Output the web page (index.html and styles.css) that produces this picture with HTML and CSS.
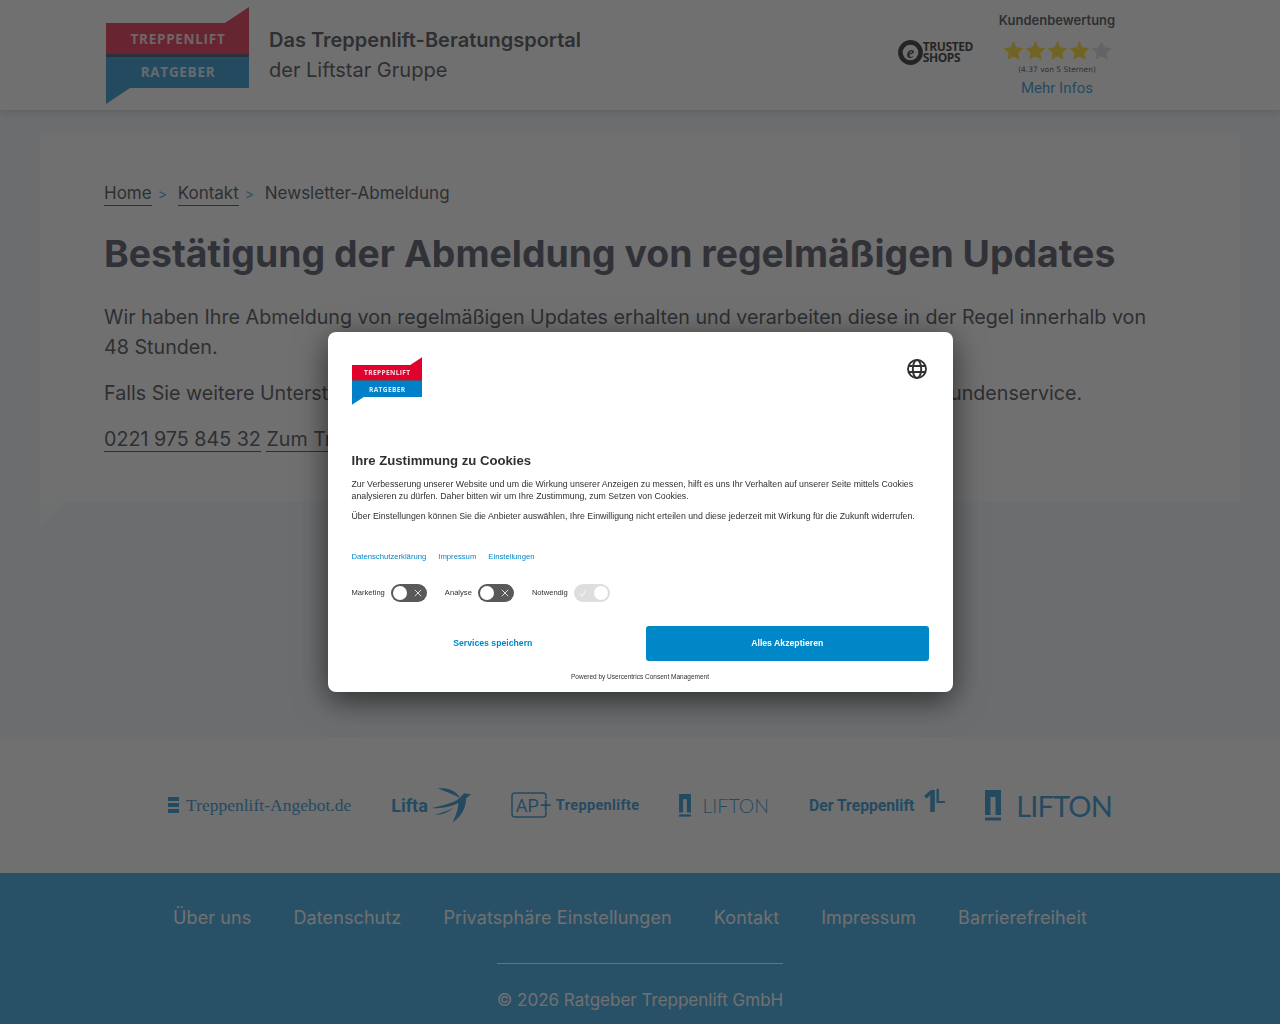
FILE: index.html
```html
<!DOCTYPE html>
<html lang="de">
<head>
    <meta charset="UTF-8">
    <meta name="viewport" content="width=device-width, initial-scale=1.0">
    <title>Bestätigung der Abmeldung</title>
    <link rel="stylesheet" href="styles.css">
</head>
<body>
    <header class="site-header">
        <div class="header-inner">
            <a class="brand" href="#">
                <svg class="brand-logo" viewBox="0 0 143 97" aria-hidden="true">
                    <polygon points="0,16 119,16 143,0 143,47 0,47" fill="#e2002d"/>
                    <rect x="0" y="47" width="143" height="3" fill="#1d2a4a"/>
                    <polygon points="0,50 143,50 143,81 24,81 0,97" fill="#0080c9"/>
                    <text x="72" y="37" class="logo-word">TREPPENLIFT</text>
                    <text x="72" y="70" class="logo-word">RATGEBER</text>
                </svg>
                <span class="brand-text">
                    <strong>Das Treppenlift-Beratungsportal</strong>
                    <span>der Liftstar Gruppe</span>
                </span>
            </a>
            <div class="rating">
                <div class="ts-badge">
                    <svg class="ts-seal" viewBox="0 0 24 24" aria-hidden="true">
                        <circle cx="12" cy="12" r="9.7" fill="none" stroke="#000" stroke-width="4.4"/>
                        <text x="12" y="17" class="ts-e">e</text>
                    </svg>
                    <span class="ts-name">TRUSTED<br>SHOPS</span>
                </div>
                <div class="rating-box">
                    <div class="rating-title">Kundenbewertung</div>
                    <div class="stars">
                        <svg viewBox="0 0 24 24"><polygon class="star" points="12,1 15.4,8.3 23.3,9.3 17.5,14.8 19,22.7 12,18.8 5,22.7 6.5,14.8 .7,9.3 8.6,8.3"/></svg>
                        <svg viewBox="0 0 24 24"><polygon class="star" points="12,1 15.4,8.3 23.3,9.3 17.5,14.8 19,22.7 12,18.8 5,22.7 6.5,14.8 .7,9.3 8.6,8.3"/></svg>
                        <svg viewBox="0 0 24 24"><polygon class="star" points="12,1 15.4,8.3 23.3,9.3 17.5,14.8 19,22.7 12,18.8 5,22.7 6.5,14.8 .7,9.3 8.6,8.3"/></svg>
                        <svg viewBox="0 0 24 24"><polygon class="star" points="12,1 15.4,8.3 23.3,9.3 17.5,14.8 19,22.7 12,18.8 5,22.7 6.5,14.8 .7,9.3 8.6,8.3"/></svg>
                        <svg viewBox="0 0 24 24"><polygon class="star star-off" points="12,1 15.4,8.3 23.3,9.3 17.5,14.8 19,22.7 12,18.8 5,22.7 6.5,14.8 .7,9.3 8.6,8.3"/></svg>
                    </div>
                    <div class="rating-note">(4.37 von 5 Sternen)</div>
                    <a class="rating-link" href="#">Mehr Infos</a>
                </div>
            </div>
        </div>
    </header>

    <main class="page">
        <section class="card">
            <nav class="crumbs">
                <a href="#">Home</a><span class="sep">&gt;</span>
                <a href="#">Kontakt</a><span class="sep">&gt;</span>
                <span>Newsletter-Abmeldung</span>
            </nav>
            <h1>Bestätigung der Abmeldung von regelmäßigen Updates</h1>
            <p>Wir haben Ihre Abmeldung von regelmäßigen Updates erhalten und verarbeiten diese in der Regel innerhalb von 48 Stunden.</p>
            <p>Falls Sie weitere Unterstützung benötigen sollten, kontaktieren Sie bitte jederzeit unseren Kundenservice.</p>
            <p><a href="#">0221 975 845 32</a> <a href="#">Zum Treppenlift-Ratgeber</a></p>
        </section>
    </main>

    <section class="brands">
        <div class="brand-item">
            <span class="ta-bars"><i></i><i></i><i></i></span>
            <span class="ta-name">Treppenlift-Angebot.de</span>
        </div>
        <div class="brand-item lifta">
            <span class="lifta-name">Lifta</span>
            <svg class="lifta-bird" viewBox="0 0 40 35" aria-hidden="true">
                <path d="M6 0 C15 -1 24 1 29 10 C22 6 14 3 6 0Z"/>
                <path d="M0 20 C11 17 23 15 28 10 L33 5 L40 6 L35 10 C35 19 31 28 21 35 C25 27 27 20 27 15 C19 19 10 21 0 20Z"/>
                <path d="M3 27 C10 25 16 23 22 20 C16 25 10 27 3 27Z"/>
            </svg>
        </div>
        <div class="brand-item ap">
            <span class="ap-box">
                <svg class="ap-frame" viewBox="0 0 36 26" aria-hidden="true">
                    <path d="M35 7V4Q35 1 32 1H4Q1 1 1 4V22Q1 25 4 25H32Q35 25 35 22V19"/>
                </svg>
                AP<b>+</b>
            </span>
            <span class="ap-name">Treppenlifte</span>
        </div>
        <div class="brand-item lifton">
            <svg class="lifton-mark" viewBox="0 0 16 31" aria-hidden="true">
                <path d="M0 0H16V25H10.5V7H5.5V25H0Z"/>
                <rect y="27.5" width="16" height="3"/>
            </svg>
            <span class="lifton-name">LIFTON</span>
        </div>
        <div class="brand-item dt">
            <span class="dt-name">Der Treppenlift</span>
            <span class="dt-mark">1<span>L</span></span>
        </div>
        <div class="brand-item lifton lifton-big">
            <svg class="lifton-mark" viewBox="0 0 16 31" aria-hidden="true">
                <path d="M0 0H16V25H10.5V7H5.5V25H0Z"/>
                <rect y="27.5" width="16" height="3"/>
            </svg>
            <span class="lifton-name">LIFTON</span>
        </div>
    </section>

    <footer class="site-footer">
        <nav class="footer-nav">
            <a href="#">Über uns</a>
            <a href="#">Datenschutz</a>
            <a href="#">Privatsphäre Einstellungen</a>
            <a href="#">Kontakt</a>
            <a href="#">Impressum</a>
            <a href="#">Barrierefreiheit</a>
        </nav>
        <div class="copyright">© 2026 Ratgeber Treppenlift GmbH</div>
    </footer>

    <!-- Cookie dialog -->
    <div class="overlay">
        <div class="dialog">
            <div class="dialog-top">
                <svg class="dialog-logo" viewBox="0 0 143 97" aria-hidden="true">
                    <polygon points="0,16 119,16 143,0 143,47 0,47" fill="#e2002d"/>
                    <rect x="0" y="47" width="143" height="3" fill="#1d2a4a"/>
                    <polygon points="0,50 143,50 143,81 24,81 0,97" fill="#0080c9"/>
                    <text x="72" y="37" class="logo-word">TREPPENLIFT</text>
                    <text x="72" y="70" class="logo-word">RATGEBER</text>
                </svg>
                <svg class="globe" viewBox="0 0 20 20" aria-hidden="true">
                    <circle cx="10" cy="10" r="9"/>
                    <ellipse cx="10" cy="10" rx="4.2" ry="9"/>
                    <path d="M1.6 7H18.4M1.6 13H18.4"/>
                </svg>
            </div>
            <h2>Ihre Zustimmung zu Cookies</h2>
            <p class="dialog-text">Zur Verbesserung unserer Website und um die Wirkung unserer Anzeigen zu messen, hilft es uns Ihr Verhalten auf unserer Seite mittels Cookies analysieren zu dürfen. Daher bitten wir um Ihre Zustimmung, zum Setzen von Cookies.</p>
            <p class="dialog-text">Über Einstellungen können Sie die Anbieter auswählen, Ihre Einwilligung nicht erteilen und diese jederzeit mit Wirkung für die Zukunft widerrufen.</p>
            <div class="dialog-links">
                <a href="#">Datenschutzerklärung</a>
                <a href="#">Impressum</a>
                <a href="#">Einstellungen</a>
            </div>
            <div class="toggles">
                <div class="toggle-row">
                    <span>Marketing</span>
                    <span class="toggle"><i class="knob"></i><svg viewBox="0 0 10 10"><path d="M1 1L9 9M9 1L1 9"/></svg></span>
                </div>
                <div class="toggle-row">
                    <span>Analyse</span>
                    <span class="toggle"><i class="knob"></i><svg viewBox="0 0 10 10"><path d="M1 1L9 9M9 1L1 9"/></svg></span>
                </div>
                <div class="toggle-row">
                    <span>Notwendig</span>
                    <span class="toggle toggle-on"><svg viewBox="0 0 10 10"><path d="M1 6L4 9L9 1"/></svg><i class="knob"></i></span>
                </div>
            </div>
            <div class="dialog-actions">
                <button class="btn-save">Services speichern</button>
                <button class="btn-accept">Alles Akzeptieren</button>
            </div>
            <div class="powered">Powered by Usercentrics Consent Management</div>
        </div>
    </div>
</body>
</html>
```

FILE: styles.css
```css
* {
    margin: 0;
    padding: 0;
    box-sizing: border-box;
}

body {
    background: #f1f6fa;
    color: #21252f;
    font-family: Inter, 'Noto Sans', sans-serif;
}

a {
    color: inherit;
}

/* header */
.site-header {
    height: 110px;
    background: #fff;
    box-shadow: 0 2px 8px rgba(0, 0, 0, 0.2);
    position: relative;
}

.header-inner {
    width: 1072px;
    margin: 0 auto;
    padding: 7px 0 0 2px;
    display: flex;
    justify-content: space-between;
}

.brand {
    display: flex;
    text-decoration: none;
}

.brand-logo {
    width: 143px;
    height: 97px;
}

.logo-word {
    fill: #fff;
    font-family: 'Open Sans', sans-serif;
    font-size: 13.5px;
    font-weight: 700;
    letter-spacing: 0.7px;
    text-anchor: middle;
    opacity: 0.85;
}

.brand-text {
    margin: 20px 0 0 20px;
    display: flex;
    flex-direction: column;
    gap: 4px;
    font-size: 20px;
    line-height: 26px;
}

.brand-text strong {
    font-weight: 600;
}

.rating {
    display: flex;
    margin-right: 59px;
}

.ts-badge {
    display: flex;
    align-items: center;
    height: 40px;
    margin-top: 25px;
}

.ts-seal {
    width: 25px;
    height: 25px;
}

.ts-e {
    font-family: 'Liberation Serif', serif;
    font-style: italic;
    font-size: 16px;
    font-weight: 700;
    text-anchor: middle;
}

.ts-name {
    font-family: 'Open Sans', sans-serif;
    font-size: 12px;
    font-weight: 700;
    line-height: 11px;
    letter-spacing: -0.4px;
    color: #000;
}

.rating-box {
    width: 120px;
    margin-left: 24px;
    display: flex;
    flex-direction: column;
    align-items: center;
    padding-top: 5px;
}

.rating-title {
    font-size: 13px;
    line-height: 16px;
    font-weight: 600;
}

.stars {
    display: flex;
    gap: 1px;
    margin-top: 12px;
}

.stars svg {
    width: 21px;
    height: 21px;
}

.star {
    fill: #ffd800;
}

.star-off {
    fill: #d8d8d8;
}

.rating-note {
    font-family: 'DejaVu Sans', sans-serif;
    font-size: 7.5px;
    line-height: 10px;
    margin-top: 4px;
}

.rating-link {
    font-family: Roboto, sans-serif;
    font-size: 15px;
    line-height: 20px;
    margin-top: 3px;
    color: #0080c9;
    text-decoration: none;
}

/* main */
.page {
    height: 627px;
    padding: 23px 40px 0;
}

.card {
    position: relative;
    height: 369px;
    background: #fff;
    padding: 47px 64px 0;
}

.card::after {
    content: '';
    position: absolute;
    left: 0;
    top: 100%;
    border-top: 24px solid #f8fafc;
    border-right: 24px solid transparent;
}

.crumbs {
    font-size: 17px;
    line-height: 26px;
}

.crumbs a {
    text-decoration: none;
    border-bottom: 1px solid #21252f;
    padding-bottom: 2px;
}

.sep {
    color: #1a9fb8;
    margin: 0 6px;
    font-size: 14px;
}

h1 {
    font-size: 37.4px;
    line-height: 46px;
    font-weight: 700;
    margin: 24px 0 25px;
    color: #2b2f45;
}

.card p {
    font-size: 19.7px;
    line-height: 30px;
    margin-bottom: 16px;
}

.card p a {
    text-decoration: none;
    border-bottom: 1px solid #21252f;
}

/* brand strip */
.brands {
    height: 136px;
    background: #fff;
    display: flex;
    align-items: center;
    justify-content: center;
    gap: 40px;
    color: #0080c9;
}

.brand-item {
    display: flex;
    align-items: center;
}

.ta-bars {
    display: flex;
    flex-direction: column;
    gap: 2px;
    margin-right: 7px;
}

.ta-bars i {
    display: block;
    width: 11px;
    height: 4px;
    background: #0080c9;
}

.ta-name {
    font-family: 'Liberation Serif', serif;
    font-size: 17.5px;
}

.lifta-name {
    font-family: Roboto, sans-serif;
    font-size: 18px;
    font-weight: 700;
}

.lifta-bird {
    width: 39px;
    height: 35px;
    margin-left: 4px;
    fill: #0080c9;
}

.ap-box {
    position: relative;
    font-family: Roboto, sans-serif;
    font-size: 18px;
    height: 26px;
    width: 39px;
    padding-left: 5px;
    line-height: 26px;
    white-space: nowrap;
}

.ap-frame {
    position: absolute;
    left: 0;
    top: 0;
    width: 36px;
    height: 26px;
    fill: none;
    stroke: #0080c9;
    stroke-width: 1.5;
}

.ap-box b {
    font-weight: 400;
    font-size: 20px;
    margin-left: 1px;
}

.ap-name {
    font-family: Roboto, sans-serif;
    font-size: 14.5px;
    font-weight: 700;
    margin-left: 6px;
    letter-spacing: 0.35px;
}

.lifton-mark {
    width: 12px;
    height: 23px;
    fill: #0080c9;
}

.lifton-name {
    font-family: Lato, sans-serif;
    font-size: 19.5px;
    font-weight: 300;
    margin-left: 11px;
}

.lifton-big .lifton-mark {
    width: 16px;
    height: 31px;
}

.lifton-big .lifton-name {
    font-size: 29px;
    font-weight: 400;
    letter-spacing: -0.9px;
    margin-left: 15px;
}

.dt-name {
    font-family: Roboto, sans-serif;
    font-size: 15.7px;
    font-weight: 700;
}

.dt-mark {
    font-family: 'Open Sans', sans-serif;
    font-size: 30px;
    font-weight: 700;
    margin: -14px 0 0 8px;
    line-height: 28px;
    letter-spacing: -5px;
}

.dt-mark span {
    font-size: 20px;
    font-weight: 600;
    letter-spacing: 0;
    vertical-align: 9px;
}

/* footer */
.site-footer {
    height: 151px;
    background: #0e96e0;
    color: #fff;
    font-size: 18px;
    padding-top: 32px;
    text-align: center;
}

.footer-nav {
    display: flex;
    justify-content: center;
    gap: 42px;
    padding-right: 20px;
    letter-spacing: 0.1px;
}

.footer-nav a {
    text-decoration: none;
    line-height: 26px;
}

.copyright {
    display: inline-block;
    margin-top: 32px;
    padding-top: 26px;
    border-top: 1px solid #fff;
    font-size: 17px;
}

/* cookie dialog */
.overlay {
    position: fixed;
    top: 0;
    left: 0;
    width: 100%;
    height: 100%;
    background: rgba(51, 51, 51, 0.7);
    display: flex;
    align-items: center;
    justify-content: center;
}

.dialog {
    width: 625px;
    height: 360px;
    background: #fff;
    border-radius: 8px;
    padding: 24px 24px 0;
    box-shadow: 0 8px 32px rgba(0, 0, 0, 0.6);
    font-family: 'Liberation Sans', Arial, sans-serif;
    color: #303030;
}

.dialog-top {
    display: flex;
    justify-content: space-between;
    height: 96px;
}

.dialog-logo {
    width: 70px;
    height: 48px;
    margin-top: 1px;
}

.globe {
    width: 20px;
    height: 20px;
    margin: 3px 2px 0 0;
    fill: none;
    stroke: #303030;
    stroke-width: 1.9;
}

h2 {
    font-size: 13.15px;
    line-height: 18px;
    font-weight: 700;
    margin-bottom: 9px;
}

.dialog-text {
    font-size: 8.78px;
    line-height: 11.5px;
    margin-bottom: 9px;
}

.dialog-links {
    display: flex;
    gap: 12px;
    margin-top: 29px;
    font-size: 7.7px;
    line-height: 10px;
}

.dialog-links a {
    color: #0087c8;
    text-decoration: none;
}

.toggles {
    display: flex;
    gap: 18px;
    margin-top: 22px;
}

.toggle-row {
    display: flex;
    align-items: center;
    gap: 6px;
    font-size: 7.6px;
}

.toggle {
    width: 36px;
    height: 18px;
    border-radius: 10px;
    background: #595959;
    display: flex;
    align-items: center;
    justify-content: space-between;
    padding: 0 5px 0 2px;
}

.knob {
    width: 14px;
    height: 14px;
    border-radius: 50%;
    background: #fff;
}

.toggle svg {
    width: 8px;
    height: 8px;
    fill: none;
    stroke: #fff;
    stroke-width: 1;
}

.toggle-on {
    background: #dedede;
    padding: 0 2px 0 5px;
}

.dialog-actions {
    display: flex;
    gap: 12px;
    margin-top: 24px;
}

.dialog-actions button {
    flex: 1;
    height: 35px;
    border: none;
    border-radius: 3px;
    font-family: 'Liberation Sans', Arial, sans-serif;
    font-size: 8.7px;
    font-weight: 700;
}

.btn-save {
    background: #fff;
    color: #0087c8;
}

.btn-accept {
    background: #0087c8;
    color: #fff;
}

.powered {
    margin-top: 11px;
    text-align: center;
    font-size: 6.5px;
    line-height: 9px;
}
```
